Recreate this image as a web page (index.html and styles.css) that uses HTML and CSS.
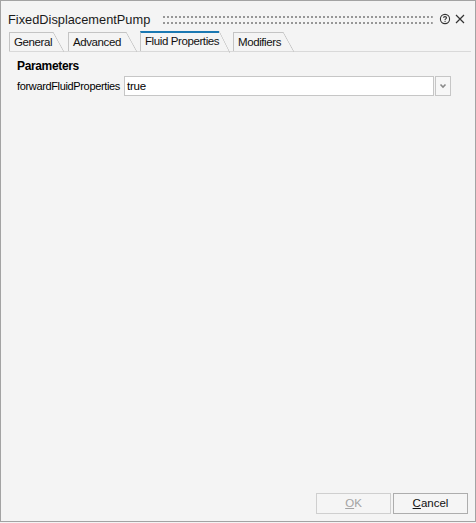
FILE: index.html
```html
<!DOCTYPE html>
<html>
<head>
<meta charset="utf-8">
<link rel="stylesheet" href="styles.css">
</head>
<body>
<div class="window">
  <div class="titlebar">
    <span class="title">FixedDisplacementPump</span>
    <svg class="grip" width="100%" height="8">
      <defs>
        <pattern id="dots" width="4" height="6" patternUnits="userSpaceOnUse">
          <rect x="0" y="0" width="2" height="2" fill="#979797"/>
        </pattern>
      </defs>
      <rect x="0" y="0" width="100%" height="8" fill="url(#dots)"/>
    </svg>
    <svg class="help" width="12" height="12" viewBox="0 0 12 12">
      <circle cx="6" cy="6" r="4.6" fill="none" stroke="#333" stroke-width="1.1"/>
      <path d="M4.5 4.8 C4.5 3.2 7.5 3.2 7.5 4.8 C7.5 5.9 6 5.8 6 7" fill="none" stroke="#333" stroke-width="1.1"/>
      <rect x="5.5" y="7.8" width="1.1" height="1.1" fill="#333"/>
    </svg>
    <svg class="close" width="10" height="10" viewBox="0 0 10 10">
      <path d="M1 1 L9 9 M9 1 L1 9" stroke="#333" stroke-width="1.2"/>
    </svg>
  </div>
  <div class="tabs">
    <div class="tab t-general">General</div>
    <div class="tab t-advanced">Advanced</div>
    <div class="tab t-fluid active">Fluid Properties</div>
    <div class="tab t-mod">Modifiers</div>
  </div>
  <div class="content">
    <div class="section">Parameters</div>
    <div class="row">
      <span class="label">forwardFluidProperties</span>
      <div class="combo">
        <div class="field">true</div>
        <div class="drop">
          <svg width="8" height="6" viewBox="0 0 8 6">
            <path d="M1.5 1.5 L4 4 L6.5 1.5" fill="none" stroke="#8a8a8a" stroke-width="1.6"/>
          </svg>
        </div>
      </div>
    </div>
  </div>
  <div class="footer">
    <button class="btn disabled"><u>O</u>K</button>
    <button class="btn"><u>C</u>ancel</button>
  </div>
</div>
</body>
</html>
```
FILE: styles.css
```css
* { box-sizing: border-box; }
html, body { margin: 0; padding: 0; background: #f4f4f4; }
body {
  font-family: "Liberation Sans", Arial, sans-serif;
  color: #000;
}
.window {
  width: 476px;
  height: 522px;
  border: 1px solid #a3a3a3;
  background: #f4f4f4;
  display: flex;
  flex-direction: column;
}
.titlebar {
  display: flex;
  align-items: flex-start;
  height: 30px;
  padding-left: 7px;
  padding-right: 10px;
}
.title {
  margin-top: 9px;
  font-size: 12.8px;
  line-height: 20px;
  color: #1a1a1a;
}
.grip {
  flex: 1;
  margin-top: 15px;
  margin-left: 13px;
  margin-right: 6px;
  height: 8px;
}
.help {
  margin-top: 12px;
  margin-right: 4px;
}
.close {
  margin-top: 13px;
}
.tabs {
  display: flex;
  align-items: flex-end;
  height: 21px;
  margin-left: 8px;
  margin-right: 4px;
  border-bottom: 1px solid #d9d9d9;
}
.tab {
  position: relative;
  height: 19px;
  padding: 0 0 0 4px;
  border-top: 1px solid #c4c4c4;
  border-left: 1px solid #c4c4c4;
  font-size: 11.5px;
  letter-spacing: -0.4px;
  line-height: 18px;
  color: #111;
  white-space: nowrap;
}
.t-general { width: 44px; margin-right: 15px; }
.t-advanced { width: 58px; margin-right: 14px; }
.t-fluid { width: 79px; margin-right: 14px; }
.t-mod { width: 50px; }
.tab::after {
  content: "";
  position: absolute;
  left: 100%;
  top: -1px;
  width: 11px;
  height: 20px;
  background: linear-gradient(to top right, transparent calc(50% - 0.7px), #c4c4c4 50%, transparent calc(50% + 0.7px));
}
.tab.active {
  height: 20px;
  border-top: 2px solid #1a78b2;
  line-height: 17px;
}
.tab.active::after {
  top: -2px;
  height: 22px;
}
.content {
  padding: 7px 24px 0 15px;
}
.section {
  font-weight: bold;
  font-size: 12px;
  letter-spacing: -0.35px;
  line-height: 14px;
  padding-left: 1px;
}
.row {
  display: flex;
  align-items: center;
  margin-top: 3px;
}
.label {
  width: 108px;
  font-size: 11px;
  letter-spacing: -0.35px;
  padding-left: 1px;
}
.combo {
  flex: 1;
  display: flex;
  height: 20px;
}
.field {
  flex: 1;
  background: #fff;
  border: 1px solid #c6c6c6;
  font-size: 11.5px;
  line-height: 18px;
  padding-left: 2px;
  letter-spacing: -0.2px;
}
.drop {
  width: 16px;
  margin-left: 1px;
  border: 1px solid #c6c6c6;
  background: #f7f7f7;
  display: flex;
  align-items: center;
  justify-content: center;
}
.footer {
  margin-top: auto;
  display: flex;
  justify-content: flex-end;
  gap: 2px;
  padding: 0 7px 7px 0;
}
.btn {
  width: 75px;
  height: 21px;
  background: #f5f5f5;
  border: 1px solid #adadad;
  border-radius: 0;
  font-family: "Liberation Sans", Arial, sans-serif;
  font-size: 11.5px;
  color: #111;
  padding: 0;
  line-height: 19px;
}
.btn.disabled {
  border-color: #cfcfcf;
  color: #a3a3a3;
}
```
